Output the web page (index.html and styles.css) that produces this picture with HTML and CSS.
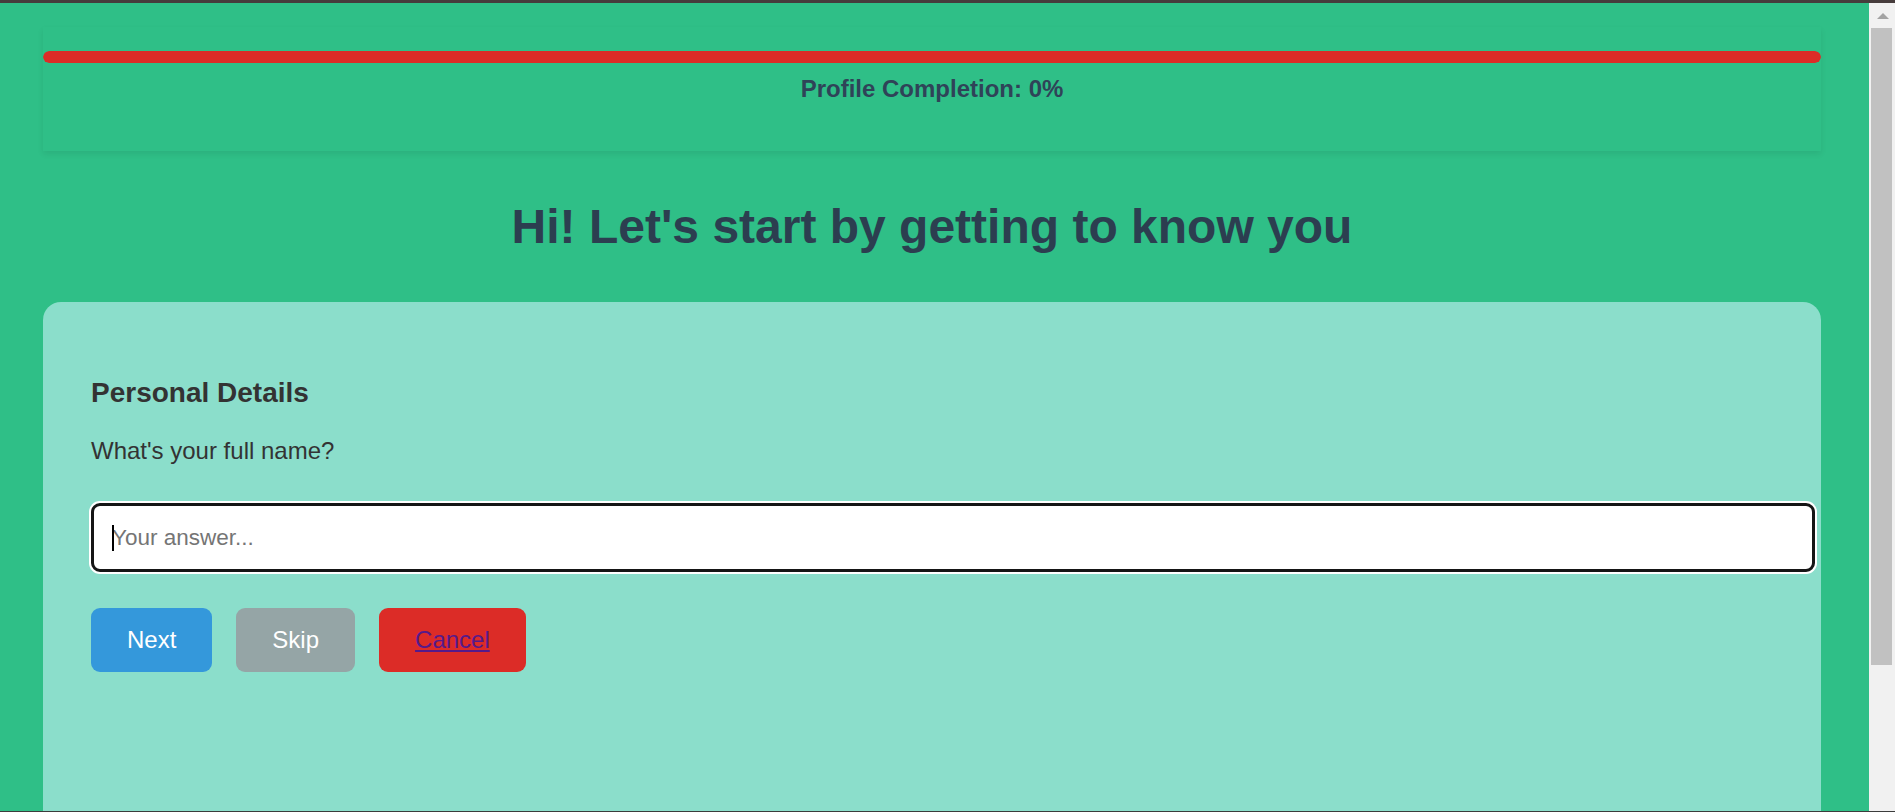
FILE: index.html
```html
<!DOCTYPE html>
<html lang="en">
<head>
<meta charset="utf-8">
<title>Profile</title>
<link rel="stylesheet" href="styles.css">
</head>
<body class="body">
  <div class="page">
    <div class="progress-card">
      <div class="progress-track"><div class="progress-fill" style="width: 100%"></div></div>
      <p class="progress-label">Profile Completion: 0%</p>
    </div>
    <h1 class="title">Hi! Let's start by getting to know you</h1>
    <div class="card">
      <h3 class="section-title">Personal Details</h3>
      <p class="question">What's your full name?</p>
      <div class="answer-field">
        <input class="answer" type="text" placeholder="Your answer...">
        <span class="caret" aria-hidden="true"></span>
      </div>
      <div class="actions">
        <button class="btn btn-next" type="button">Next</button>
        <button class="btn btn-skip" type="button">Skip</button>
        <a class="btn btn-cancel" href="#">Cancel</a>
      </div>
    </div>
  </div>
  <div class="scrollbar" aria-hidden="true">
    <div class="scroll-up"><span class="arrow-up"></span></div>
    <div class="scroll-thumb"></div>
  </div>
  <div class="frame-bottom" aria-hidden="true"></div>
</body>
</html>
```

FILE: styles.css
```css
html {
  background: #2fbf87;
}

.body {
  margin: 0;
  border-top: 3px solid #463c3c;
  font-family: "Liberation Sans", Arial, sans-serif;
  background: #2fbf87;
}

.page {
  padding: 24px 74px 43px 43px;
}

.progress-card {
  padding: 24px 0;
  box-shadow: 0 3px 6px rgba(0, 0, 0, 0.08);
}

.progress-track {
  height: 12px;
  border-radius: 6px;
  overflow: hidden;
}

.progress-fill {
  height: 100%;
  background: #dc2c27;
  border-radius: 6px;
}

.progress-label {
  margin: 12px 0 24px;
  text-align: center;
  font-size: 24px;
  font-weight: bold;
  color: #2f4358;
}

.title {
  margin: 48px 0;
  text-align: center;
  font-size: 48px;
  font-weight: bold;
  color: #2c3e50;
}

.card {
  box-sizing: border-box;
  min-height: 629px;
  padding: 47px 48px 48px;
  border-radius: 18px;
  background: #8bdecb;
}

.section-title {
  margin: 28px 0;
  font-size: 28px;
  font-weight: bold;
  color: #333333;
}

.question {
  margin: 28px 0 0;
  font-size: 24px;
  color: #333333;
}

.answer-field {
  position: relative;
  margin-top: 38px;
}

.answer {
  display: block;
  width: 100%;
  margin: 0;
  padding: 18px;
  border: 3px solid #151515;
  border-radius: 9px;
  box-shadow: 0 0 0 2px #ffffff;
  background: #ffffff;
  font-family: "Liberation Sans", Arial, sans-serif;
  font-size: 22.5px;
  line-height: 27px;
  color: #222222;
  outline: none;
}

.answer::placeholder {
  color: #757575;
}

.caret {
  position: absolute;
  left: 21px;
  top: 22px;
  width: 2px;
  height: 26px;
  background: #000000;
}

.actions {
  display: flex;
  gap: 24px;
  margin-top: 36px;
}

.btn {
  display: inline-block;
  padding: 18px 36px;
  border: none;
  border-radius: 9px;
  font-family: "Liberation Sans", Arial, sans-serif;
  font-size: 24px;
  line-height: normal;
  color: #ffffff;
  cursor: pointer;
}

.btn-next {
  background: #3498db;
}

.btn-skip {
  background: #95a5a6;
}

.btn-cancel {
  background: #dc2c27;
  color: #551a8b;
  text-decoration: underline;
}

/* window scrollbar as photographed */
.scrollbar {
  position: fixed;
  top: 0;
  right: 0;
  bottom: 0;
  width: 26px;
  display: flex;
  flex-direction: column;
  border-top: 3px solid #463c3c;
  background: #f1f1f1;
}

.scroll-up {
  height: 25px;
  display: flex;
  align-items: center;
  justify-content: center;
  padding-left: 1px;
}

.arrow-up {
  width: 0;
  height: 0;
  border-left: 6px solid transparent;
  border-right: 6px solid transparent;
  border-bottom: 6px solid #a3a3a3;
}

.scroll-thumb {
  height: 637px;
  margin: 0 3px 0 2px;
  background: #c1c1c1;
}

.frame-bottom {
  position: fixed;
  left: 0;
  right: 0;
  bottom: 0;
  height: 1px;
  background: #3c3c3c;
}
```
